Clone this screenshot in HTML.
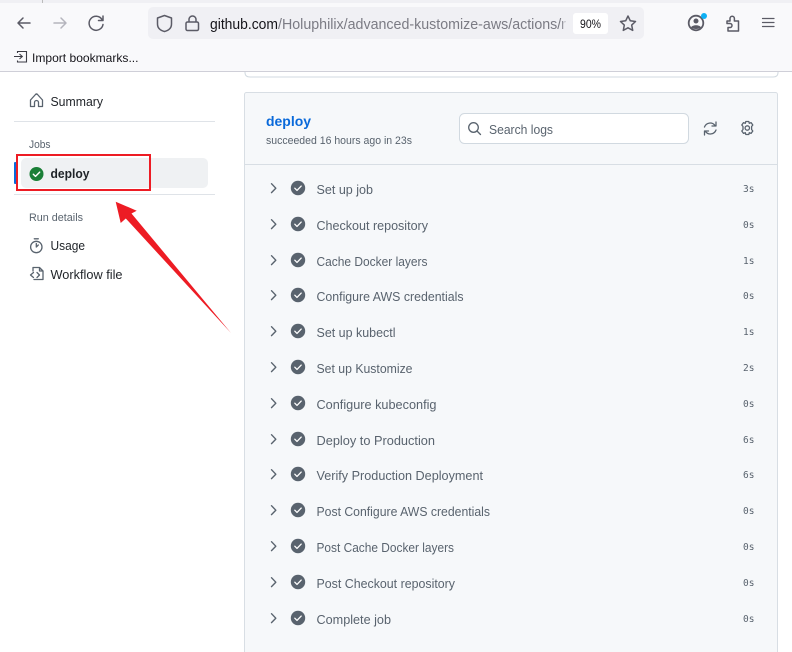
<!DOCTYPE html>
<html lang="en"><head><meta charset="utf-8"><title>deploy</title>
<style>html,body{margin:0;padding:0;background:#fff;width:792px;height:652px;overflow:hidden}svg{display:block}text{font-family:"Liberation Sans",sans-serif}.m{font-family:"DejaVu Sans Mono","Liberation Mono",monospace;font-size:9.5px;fill:#59636e}.s{font-size:12.6px;fill:#59636e}.i{fill:none;stroke:#59636e;stroke-width:1.3;stroke-linecap:round;stroke-linejoin:round}.b{fill:none;stroke:#5b5b66;stroke-width:1.5;stroke-linecap:round;stroke-linejoin:round}</style></head><body>
<svg width="792" height="652" viewBox="0 0 792 652" xmlns="http://www.w3.org/2000/svg">
<defs><g id="st"><circle cx="0" cy="0" r="7.2" fill="#59636e"/><path d="M-3.2 .2L-1 2.4L3.2-1.9" fill="none" stroke="#fff" stroke-width="1.3" stroke-linecap="round" stroke-linejoin="round"/></g><path id="ch" d="M-1.500-4.300L2.800 .2L-1.500 4.600" fill="none" stroke="#59636e" stroke-width="1.4" stroke-linecap="round" stroke-linejoin="round"/></defs>
<rect width="792" height="72" fill="#f9f9fb"/><rect width="792" height="3" fill="#f0f0f4"/><rect x="42" width="1" height="3" fill="#bbb"/><rect y="71" width="792" height="1" fill="#cfcfd8"/>
<rect x="148" y="7" width="496" height="32" rx="5" fill="#f0f0f4"/>
<path class="b" d="M30 23H18M23 18L18 23L23 28"/><path class="b" style="stroke:#b5b5bd" d="M54 23H66M61 18L66 23L61 28"/>
<path class="b" d="M102 19.500A7 7 0 1 0 103 24.500M103 16V20.500H98.500"/>
<path class="b" d="M164.500 15.500L171.500 18V24C171.500 28 168.500 30.500 164.500 31.500C160.500 30.500 157.500 28 157.500 24V18Z"/>
<path class="b" d="M189 22V19.500A3.500 3.500 0 0 1 196 19.500V22M187.500 22H197A1.500 1.500 0 0 1 198.500 23.500V29A1.500 1.500 0 0 1 197 30.500H187.500A1.500 1.500 0 0 1 186 29V23.500A1.500 1.500 0 0 1 187.500 22Z"/>
<text x="210" y="29" font-size="14.500" fill="#15141a" textLength="68" lengthAdjust="spacingAndGlyphs">github.com</text>
<text x="278" y="29" font-size="14.500" fill="#7b7b84" textLength="288" lengthAdjust="spacingAndGlyphs">/Holuphilix/advanced-kustomize-aws/actions/r</text>
<rect x="563" y="10" width="10" height="26" fill="#f0f0f4" opacity=".65"/>
<rect x="573" y="13" width="35" height="21" rx="3" fill="#fff"/><text x="580" y="28" font-size="12" fill="#15141a" textLength="21" lengthAdjust="spacingAndGlyphs">90%</text>
<path class="b" d="M628 16L630.300 20.800L635.500 21.500L631.700 25.100L632.700 30.400L628 27.800L623.300 30.400L624.300 25.100L620.500 21.500L625.700 20.800Z"/>
<circle cx="696" cy="23" r="7.300" class="b" style="stroke-width:1.800"/><circle cx="696" cy="21" r="2.500" fill="#5b5b66"/><path d="M691 27.500C692 24.500 700 24.500 701 27.500C699 29.500 693 29.500 691 27.500Z" fill="#5b5b66"/><circle cx="704" cy="16" r="3" fill="#0db0f5"/>
<path class="b" d="M727 21H730V18.500A2.200 2.200 0 0 1 734.400 18.500V21H738.500V31H728V27.500H730A2 2 0 0 0 730 23.500H727Z"/>
<path class="b" d="M762.500 18.500H774M762.500 22.500H774M762.500 26.500H774" style="stroke-width:1.200"/>
<path d="M14 56.500H22M19.500 54L22.300 56.500L19.500 59M17.500 53V51.500H26.500V62H17.500V60.500" fill="none" stroke="#3c3c44" stroke-width="1.100"/>
<text x="32" y="62" font-size="12" fill="#15141a" textLength="106.500" lengthAdjust="spacingAndGlyphs">Import bookmarks...</text>

<path d="M245 72V72.500Q245 77 250 77H773Q778 77 778 72.500V72" fill="#fff" stroke="#d1d9e0"/>

<path class="i" d="M30.500 100L35.500 94.500Q36.500 93.500 37.500 94.500L42.500 100V106.500H38.500V102.500A2 2 0 0 0 34.500 102.500V106.500H30.500Z"/>
<text x="50.500" y="106" font-size="12.600" fill="#1f2328" textLength="52.500" lengthAdjust="spacingAndGlyphs">Summary</text>
<rect x="14" y="121" width="201" height="1" fill="#dfe3e8"/>
<text x="29" y="148" font-size="10.800" fill="#59636e" textLength="21.500" lengthAdjust="spacingAndGlyphs">Jobs</text>
<rect x="21" y="158" width="187" height="30" rx="5" fill="#eff1f3"/>
<rect x="14" y="162" width="2.500" height="22" rx="1" fill="#0969da"/>
<circle cx="36.500" cy="174" r="7" fill="#1a7f37"/><path d="M33.300 174.200L35.500 176.400L39.700 172.100" fill="none" stroke="#fff" stroke-width="1.400" stroke-linecap="round" stroke-linejoin="round"/>
<text x="50.500" y="178" font-size="12.600" font-weight="700" fill="#1f2328" textLength="39" lengthAdjust="spacingAndGlyphs">deploy</text>
<rect x="14" y="194" width="201" height="1" fill="#dfe3e8"/>
<text x="29" y="221" font-size="10.800" fill="#59636e" textLength="54" lengthAdjust="spacingAndGlyphs">Run details</text>
<circle cx="36.300" cy="247" r="5.700" class="i"/><path class="i" d="M34.300 238.800H38.300M36.300 247V243.500M36.300 247L38.300 245"/>
<text x="50.500" y="250" font-size="12.600" fill="#1f2328" textLength="34.500" lengthAdjust="spacingAndGlyphs">Usage</text>
<path class="i" d="M33 271V267.500H39.500L43 271V279.500H34M33.500 272.500L30.500 275L33.500 277.500M37 272.500L39.500 275L37 277.500M39.500 267.500V271H43"/>
<text x="50.500" y="279" font-size="12.600" fill="#1f2328" textLength="72" lengthAdjust="spacingAndGlyphs">Workflow file</text>

<rect x="17" y="155" width="133" height="35" fill="none" stroke="#ed1c24" stroke-width="2"/>
<path d="M115.700 201.700L136.700 210.700L131.500 213.500L231 333L125.800 218.500L120.700 223Z" fill="#ed1c24"/>

<rect x="244.500" y="92.500" width="533" height="570" rx="2" fill="#f6f8fa" stroke="#d8dee4"/>
<rect x="245" y="164" width="532" height="1" fill="#d8dee4"/>
<text x="266" y="126" font-size="13.500" font-weight="700" fill="#0969da" textLength="45" lengthAdjust="spacingAndGlyphs">deploy</text>
<text x="266" y="144" font-size="10.800" fill="#59636e" textLength="146" lengthAdjust="spacingAndGlyphs">succeeded 16 hours ago in 23s</text>
<rect x="459.500" y="113.500" width="229" height="30" rx="5" fill="#fff" stroke="#d1d9e0"/>
<circle cx="473.500" cy="127.500" r="4.800" class="i"/><path class="i" d="M477 131L480.500 134.500"/>
<text x="489" y="134" font-size="12.600" fill="#59636e" textLength="64" lengthAdjust="spacingAndGlyphs">Search logs</text>
<path class="i" d="M704.500 127A6 6 0 0 1 715 125.500M716 122V126H712M716 130A6 6 0 0 1 705.500 131.500M704.500 135V131H708.500"/>
<circle cx="747.300" cy="128" r="2.200" class="i"/><path class="i" d="M745.800 121.500H748.800L749.300 123.300L751.100 122.600L752.800 125L751.600 126.500V129.500L752.800 131L751.100 133.400L749.300 132.700L748.800 134.500H745.800L745.300 132.700L743.500 133.400L741.800 131L743 129.500V126.500L741.800 125L743.500 122.600L745.300 123.300Z"/>

<use href="#ch" x="273" y="188"/><use href="#st" x="298" y="188"/><text class="s" x="316.500" y="194" textLength="56.500" lengthAdjust="spacingAndGlyphs">Set up job</text><text class="m" x="743" y="192">3s</text>
<use href="#ch" x="273" y="224"/><use href="#st" x="298" y="224"/><text class="s" x="316.500" y="230" textLength="111.500" lengthAdjust="spacingAndGlyphs">Checkout repository</text><text class="m" x="743" y="228">0s</text>
<use href="#ch" x="273" y="260"/><use href="#st" x="298" y="260"/><text class="s" x="316.500" y="266" textLength="111" lengthAdjust="spacingAndGlyphs">Cache Docker layers</text><text class="m" x="743" y="264">1s</text>
<use href="#ch" x="273" y="295"/><use href="#st" x="298" y="295"/><text class="s" x="316.500" y="301" textLength="147" lengthAdjust="spacingAndGlyphs">Configure AWS credentials</text><text class="m" x="743" y="299">0s</text>
<use href="#ch" x="273" y="331"/><use href="#st" x="298" y="331"/><text class="s" x="316.500" y="337" textLength="79" lengthAdjust="spacingAndGlyphs">Set up kubectl</text><text class="m" x="743" y="335">1s</text>
<use href="#ch" x="273" y="367"/><use href="#st" x="298" y="367"/><text class="s" x="316.500" y="373" textLength="96" lengthAdjust="spacingAndGlyphs">Set up Kustomize</text><text class="m" x="743" y="371">2s</text>
<use href="#ch" x="273" y="403"/><use href="#st" x="298" y="403"/><text class="s" x="316.500" y="409" textLength="120" lengthAdjust="spacingAndGlyphs">Configure kubeconfig</text><text class="m" x="743" y="407">0s</text>
<use href="#ch" x="273" y="439"/><use href="#st" x="298" y="439"/><text class="s" x="316.500" y="445" textLength="118.500" lengthAdjust="spacingAndGlyphs">Deploy to Production</text><text class="m" x="743" y="443">6s</text>
<use href="#ch" x="273" y="474"/><use href="#st" x="298" y="474"/><text class="s" x="316.500" y="480" textLength="166.500" lengthAdjust="spacingAndGlyphs">Verify Production Deployment</text><text class="m" x="743" y="478">6s</text>
<use href="#ch" x="273" y="510"/><use href="#st" x="298" y="510"/><text class="s" x="316.500" y="516" textLength="173.500" lengthAdjust="spacingAndGlyphs">Post Configure AWS credentials</text><text class="m" x="743" y="514">0s</text>
<use href="#ch" x="273" y="546"/><use href="#st" x="298" y="546"/><text class="s" x="316.500" y="552" textLength="137.500" lengthAdjust="spacingAndGlyphs">Post Cache Docker layers</text><text class="m" x="743" y="550">0s</text>
<use href="#ch" x="273" y="582"/><use href="#st" x="298" y="582"/><text class="s" x="316.500" y="588" textLength="138.500" lengthAdjust="spacingAndGlyphs">Post Checkout repository</text><text class="m" x="743" y="586">0s</text>
<use href="#ch" x="273" y="618"/><use href="#st" x="298" y="618"/><text class="s" x="316.500" y="624" textLength="74.500" lengthAdjust="spacingAndGlyphs">Complete job</text><text class="m" x="743" y="622">0s</text>
</svg></body></html>
